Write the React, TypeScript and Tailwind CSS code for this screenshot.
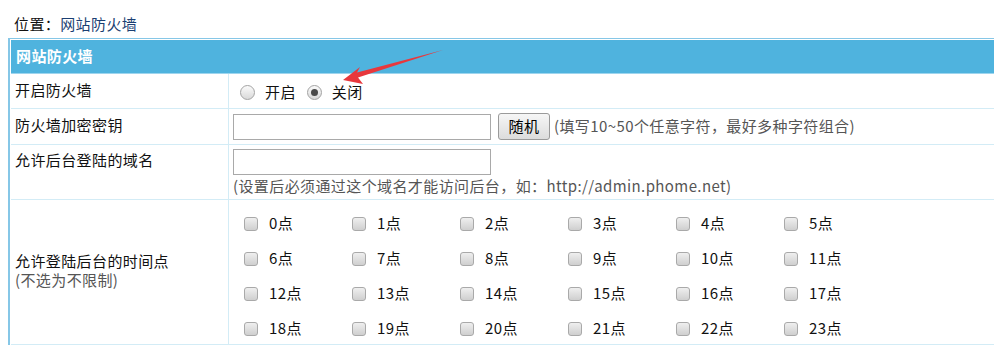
import React from "react";

const font = { fontFamily: '"Noto Sans CJK SC", "Noto Sans", sans-serif' };

function Radio({ checked }: { checked?: boolean }) {
  return (
    <span className="inline-flex items-center justify-center w-[15px] h-[15px] rounded-full border border-[#a3a3a3] bg-gradient-to-b from-[#fbfbfb] to-[#d9d9d9] shrink-0">
      {checked && <span className="w-[7px] h-[7px] rounded-full bg-[#4a4a4a]" />}
    </span>
  );
}

function Check() {
  return (
    <span className="inline-block w-[14px] h-[14px] rounded-[3px] border border-[#a9a9a9] bg-gradient-to-b from-[#efefef] to-[#cfcfcf] shrink-0" />
  );
}

export default function App() {
  const hours = Array.from({ length: 24 }, (_, i) => i);
  return (
    <div className="relative w-[994px] h-[347px] overflow-hidden bg-white text-[15px] tracking-[0.4px] text-[#111]" style={font}>
      <div className="pl-[14px] pt-[13px] h-[38px] leading-[22px]">
        位置：<span className="text-[#1b3f73]">网站防火墙</span>
      </div>
      <div className="ml-[8px] border-l-2 border-t border-[#86c7e7] pt-[1px] pl-[1px] bg-white">
        <div className="h-[34px] bg-[#4fb3de] border-b border-[#9ed5ee] flex items-center pl-[5px] text-white font-bold">
          网站防火墙
        </div>
        <div className="flex h-[35px] border-b border-[#d3ecf6]">
          <div className="w-[218px] shrink-0 border-r border-[#d3ecf6] pl-[4px] pt-[5px]">开启防火墙</div>
          <div className="flex items-center pl-[11px] pt-[3px]">
            <Radio />
            <span className="ml-[10px] mr-[11px]">开启</span>
            <Radio checked />
            <span className="ml-[10px]">关闭</span>
          </div>
        </div>
        <div className="flex h-[36px] border-b border-[#d3ecf6]">
          <div className="w-[218px] shrink-0 border-r border-[#d3ecf6] pl-[4px] pt-[5px]">防火墙加密密钥</div>
          <div className="flex items-center pl-[4px] text-[#555]">
            <span className="w-[258px] h-[26px] border border-[#a9a9a9] bg-white" />
            <span className="ml-[7px] w-[52px] h-[27px] border border-[#9a9a9a] rounded-[3px] bg-gradient-to-b from-[#f6f6f6] to-[#dcdcdc] flex items-center justify-center text-black">
              随机
            </span>
            <span className="ml-[4px]">(填写10~50个任意字符，最好多种字符组合)</span>
          </div>
        </div>
        <div className="flex h-[55px] border-b border-[#d3ecf6]">
          <div className="w-[218px] shrink-0 border-r border-[#d3ecf6] pl-[4px] pt-[4px]">允许后台登陆的域名</div>
          <div className="flex flex-col pl-[4px] pt-[4px] text-[#555]">
            <span className="w-[258px] h-[26px] border border-[#a9a9a9] bg-white" />
            <span className="leading-[22px]">(设置后必须通过这个域名才能访问后台，如：http://admin.phome.net)</span>
          </div>
        </div>
        <div className="flex h-[145px] border-b border-[#d3ecf6]">
          <div className="w-[218px] shrink-0 border-r border-[#d3ecf6] pl-[4px] flex flex-col justify-center leading-[19px] pb-[4px]">
            <span>允许登陆后台的时间点</span>
            <span className="text-[#555]">(不选为不限制)</span>
          </div>
          <div className="grid grid-cols-[repeat(6,108px)] auto-rows-[35px] pl-[15px] pt-[6px]">
            {hours.map((h) => (
              <div key={h} className="flex items-center">
                <Check />
                <span className="ml-[11px]">{h}点</span>
              </div>
            ))}
          </div>
        </div>
      </div>
      <svg className="absolute left-0 top-0 pointer-events-none" width="994" height="347">
        <polygon
          points="343,80 360,67 357,72.5 443,50 358,77.5 363,84"
          fill="#e8383d"
        />
      </svg>
    </div>
  );
}
